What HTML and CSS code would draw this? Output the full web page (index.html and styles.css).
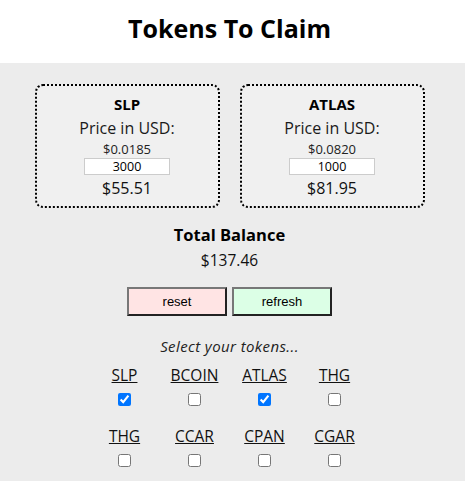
FILE: index.html
```html
<!DOCTYPE html>
<html>
<head>
<meta charset="utf-8">
<link rel="stylesheet" href="styles.css">
</head>
<body>
  <header class="header"><h1 class="title">Tokens To Claim</h1></header>
  <main class="main">
    <div class="cards">
      <div class="card">
        <div class="card-name">SLP</div>
        <div class="card-label">Price in USD:</div>
        <div class="card-price">$0.0185</div>
        <input class="card-input" type="text" value="3000">
        <div class="card-value">$55.51</div>
      </div>
      <div class="card">
        <div class="card-name">ATLAS</div>
        <div class="card-label">Price in USD:</div>
        <div class="card-price">$0.0820</div>
        <input class="card-input" type="text" value="1000">
        <div class="card-value">$81.95</div>
      </div>
    </div>
    <div class="total">
      <div class="total-title">Total Balance</div>
      <div class="total-value">$137.46</div>
    </div>
    <div class="buttons">
      <button class="btn btn-reset">reset</button>
      <button class="btn btn-refresh">refresh</button>
    </div>
    <div class="select-title">Select your tokens...</div>
    <div class="tokens">
      <label class="token"><span class="token-name">SLP</span><input type="checkbox" checked></label>
      <label class="token"><span class="token-name">BCOIN</span><input type="checkbox"></label>
      <label class="token"><span class="token-name">ATLAS</span><input type="checkbox" checked></label>
      <label class="token"><span class="token-name">THG</span><input type="checkbox"></label>
      <label class="token"><span class="token-name">THG</span><input type="checkbox"></label>
      <label class="token"><span class="token-name">CCAR</span><input type="checkbox"></label>
      <label class="token"><span class="token-name">CPAN</span><input type="checkbox"></label>
      <label class="token"><span class="token-name">CGAR</span><input type="checkbox"></label>
    </div>
  </main>
</body>
</html>
```

FILE: styles.css
```css
* { box-sizing: border-box; }
html, body { margin: 0; padding: 0; }
body {
  font-family: "Open Sans", "Noto Sans", sans-serif;
  background: #ececec;
  color: #111;
  min-height: 481px;
}
.header {
  background: #fff;
  height: 63px;
  display: flex;
  align-items: center;
  justify-content: center;
  padding-right: 6px;
}
.title {
  margin: 0 0 8px 0;
  font-size: 25px;
  font-weight: 700;
  color: #000;
}
.main {
  padding-top: 21px;
  padding-right: 6px;
  display: flex;
  flex-direction: column;
  align-items: center;
}
.cards {
  display: flex;
  gap: 20px;
}
.card {
  width: 185px;
  height: 124px;
  border: 2px dotted #000;
  border-radius: 8px;
  background: #f0f0f0;
  display: flex;
  flex-direction: column;
  align-items: center;
  padding-top: 8px;
}
.card-name { font-weight: 700; font-size: 15px; line-height: 20px; color: #000; }
.card-label { font-size: 16px; line-height: 22px; margin-top: 3px; color: #1a1a1a; }
.card-price { font-size: 13px; line-height: 16px; margin-top: 2px; color: #222; }
.card-input {
  width: 86px;
  height: 17px;
  border: 1px solid #ccc;
  background: #fff;
  font-family: "Open Sans", sans-serif;
  font-size: 12.5px;
  text-align: center;
  padding: 0;
  margin-top: 1px;
  color: #000;
}
.card-value { font-size: 16px; line-height: 22px; margin-top: 2px; color: #111; }
.total { margin-top: 16px; text-align: center; }
.total-title { font-weight: 700; font-size: 16.5px; line-height: 22px; color: #000; }
.total-value { font-size: 15.5px; line-height: 22px; margin-top: 3px; color: #111; }
.buttons { display: flex; gap: 5px; margin-top: 16px; }
.btn {
  width: 100px;
  height: 29px;
  border: 2px outset #777;
  font-family: "Liberation Sans", Arial, sans-serif;
  font-size: 13px;
  color: #000;
  padding: 0;
}
.btn-reset { background: #ffe4e4; }
.btn-refresh { background: #dcffe6; }
.select-title { margin-top: 20px; font-style: italic; font-size: 15px; letter-spacing: 0.4px; line-height: 20px; color: #222; }
.tokens {
  display: grid;
  grid-template-columns: repeat(4, 70px);
  row-gap: 20px;
  margin-top: 9px;
}
.token {
  display: flex;
  flex-direction: column;
  align-items: center;
}
.token-name { font-size: 15.5px; line-height: 20px; text-decoration: underline; color: #111; }
.token input { margin: 8px 0 0 0; width: 13px; height: 13px; }
```
